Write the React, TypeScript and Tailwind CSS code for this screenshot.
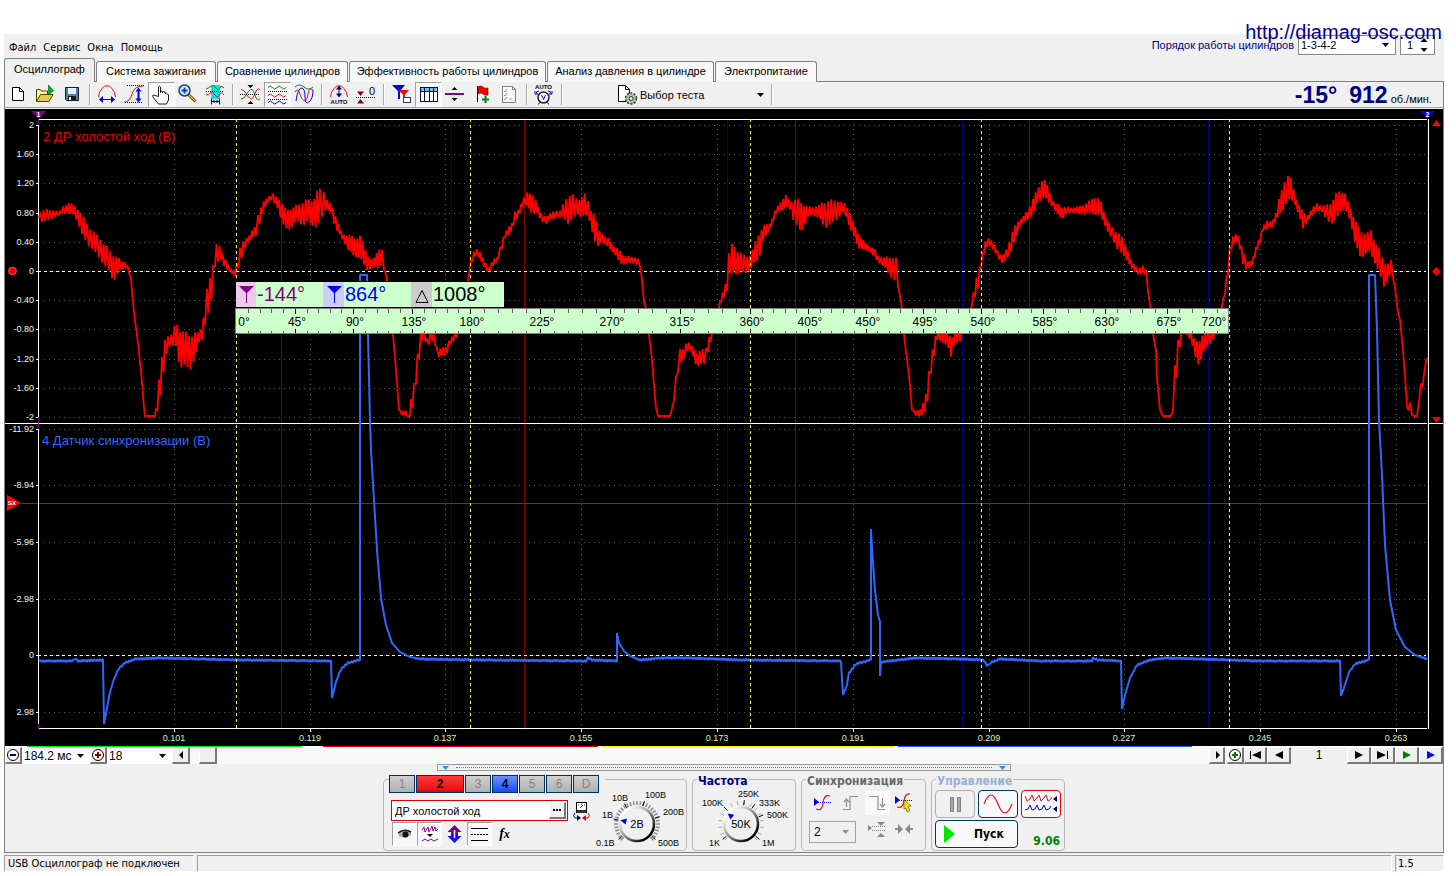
import React from 'react';

type Point = [number, number, number?];

/* ---------- Signal data: [x, level, ripple] ---------- */

const RED: Point[] = [
  [39, 218, 4], [45, 214, 6], [50, 216, 5], [55, 213, 3], [60, 213, 2], [65, 209, 4], [69, 208, 5], [73, 210, 5], [78, 215, 6],
  [82, 225, 10], [87, 234, 10], [92, 239, 9], [97, 246, 10], [102, 251, 10], [107, 258, 11], [112, 266, 12], [116, 267, 11],
  [119, 265, 6], [123, 266, 3], [126, 264, 4], [129, 272, 1], [131, 280, 1], [134, 312], [138, 343], [142, 382], [144, 408],
  [145, 416], [155, 416], [156, 411, 3], [159, 392, 13], [162, 373, 14], [165, 350, 10], [168, 341, 5], [173, 340, 6],
  [176, 334, 13], [180, 348, 18], [183, 350, 17], [192, 351, 16], [195, 346, 12], [199, 337, 5], [202, 332, 7], [205, 318, 8],
  [207, 305, 14], [210, 294, 16], [213, 276, 12], [215, 256, 10], [218, 253, 10], [221, 255, 4], [224, 260, 5], [227, 266, 3],
  [231, 271, 2], [235, 273, 3], [237, 267, 4], [240, 257, 8], [245, 243, 5], [248, 240, 2], [252, 235, 4], [256, 230, 5],
  [258, 222, 8], [261, 213, 5], [265, 203, 4], [268, 200, 2], [271, 197, 3], [273, 198, 4], [276, 201, 4], [279, 205, 6],
  [282, 212, 9], [285, 219, 10], [288, 220, 10], [292, 217, 9], [296, 214, 8], [301, 213, 10], [304, 212, 12], [309, 212, 11],
  [313, 212, 12], [317, 211, 18], [320, 206, 16], [322, 203, 13], [324, 200, 9], [327, 205, 5], [331, 209, 4], [334, 217, 6],
  [337, 225, 5], [341, 234, 3], [344, 238, 3], [348, 242, 7], [352, 246, 9], [356, 247, 9], [360, 248, 11], [364, 254, 10],
  [367, 261, 8], [370, 265, 5], [374, 262, 4], [378, 258, 9], [382, 259, 8], [384, 266, 4], [386, 275, 1], [387, 281],
  [393, 334], [396, 370], [399, 410], [402, 413, 2], [406, 413, 2], [407, 416], [410, 416], [411, 405, 6], [414, 395, 10],
  [416, 375, 10], [419, 350, 8], [421, 336, 6], [424, 332, 6], [427, 343, 4], [432, 334, 6], [435, 340, 4], [437, 352, 3],
  [439, 354, 4], [443, 351, 4], [447, 350, 3], [449, 344, 3], [452, 340, 3], [456, 334, 3], [458, 328], [464, 300], [467, 285],
  [469, 275], [471, 263, 3], [474, 255, 3], [477, 252, 3], [480, 255, 3], [484, 264, 3], [489, 270, 3], [493, 263, 3],
  [497, 260, 2], [500, 250, 3], [502, 244, 4], [505, 236, 2], [508, 232, 4], [512, 226, 3], [515, 217, 5], [518, 215, 4],
  [521, 206, 2], [524, 201, 4], [526, 199, 6], [530, 203, 9], [534, 203, 9], [537, 209, 4], [541, 217, 4], [546, 220, 3],
  [550, 217, 3], [555, 214, 4], [560, 214, 3], [563, 212, 7], [568, 208, 14], [573, 208, 12], [578, 207, 7], [582, 207, 10],
  [586, 205, 11], [588, 207, 6], [591, 218, 8], [595, 230, 13], [598, 237, 9], [601, 237, 5], [605, 241, 4], [610, 244, 5],
  [614, 250, 3], [620, 257, 6], [624, 260, 4], [630, 260, 3], [635, 260, 3], [638, 262, 3], [640, 265, 2], [642, 280, 1],
  [644, 302], [646, 308], [649, 335], [652, 360], [654, 385], [656, 408], [658, 416], [670, 416], [672, 410, 2], [674, 395, 5],
  [676, 385, 8], [678, 365, 8], [680, 358, 8], [683, 355, 6], [686, 348, 5], [689, 346, 3], [693, 352, 4], [697, 360, 7],
  [701, 358, 7], [706, 355, 8], [708, 345, 6], [712, 335, 3], [715, 325], [719, 308], [720, 303, 2], [724, 293, 4],
  [727, 284, 6], [729, 262, 10], [732, 260, 15], [736, 262, 12], [741, 262, 10], [746, 266, 8], [750, 262, 7], [754, 255, 8],
  [757, 250, 12], [760, 243, 11], [763, 233, 8], [767, 230, 5], [771, 225, 2], [775, 213, 2], [778, 209, 3], [782, 205, 5],
  [786, 202, 6], [790, 205, 4], [795, 212, 12], [800, 216, 15], [804, 216, 11], [808, 212, 5], [813, 211, 4], [819, 212, 6],
  [823, 213, 11], [828, 214, 13], [833, 212, 11], [838, 209, 8], [843, 208, 5], [846, 211, 6], [850, 220, 7], [854, 231, 6],
  [858, 240, 7], [862, 244, 5], [866, 247, 3], [870, 249, 3], [875, 254, 4], [878, 259, 3], [884, 262, 4], [888, 265, 8],
  [893, 268, 11], [896, 270, 11], [898, 282, 5], [900, 298, 2], [902, 308], [904, 335], [908, 368], [910, 385], [912, 408, 2],
  [914, 413, 2], [916, 411, 4], [919, 414, 2], [923, 410, 6], [926, 402, 8], [929, 380, 10], [931, 365, 8], [934, 350, 7],
  [937, 335, 5], [940, 335, 5], [944, 338, 6], [950, 342, 7], [951, 350, 6], [954, 338, 8], [960, 335, 6], [966, 320],
  [971, 308], [972, 303, 2], [975, 290, 7], [978, 282, 8], [981, 265, 4], [984, 248, 5], [987, 243, 4], [990, 243, 4],
  [994, 247, 3], [999, 256, 3], [1002, 260, 3], [1006, 254, 5], [1011, 246, 7], [1014, 235, 8], [1018, 226, 5], [1022, 221, 2],
  [1028, 214, 5], [1033, 208, 8], [1037, 196, 7], [1042, 190, 9], [1046, 190, 9], [1050, 198, 5], [1055, 208, 3],
  [1059, 210, 6], [1063, 213, 5], [1068, 210, 3], [1073, 210, 2], [1080, 210, 4], [1086, 209, 5], [1092, 206, 7],
  [1096, 205, 9], [1101, 210, 7], [1105, 220, 5], [1109, 229, 6], [1114, 236, 6], [1119, 242, 9], [1124, 249, 8],
  [1128, 256, 5], [1132, 266, 3], [1138, 271, 3], [1143, 270, 4], [1146, 273, 3], [1148, 290, 1], [1150, 305], [1154, 340],
  [1156, 350], [1157, 378], [1160, 410], [1163, 416], [1171, 416], [1173, 405, 5], [1175, 378, 15], [1178, 350, 10],
  [1180, 340, 8], [1183, 330, 4], [1188, 330, 4], [1191, 338, 5], [1194, 345, 6], [1197, 352, 12], [1201, 350, 10],
  [1205, 340, 9], [1210, 336, 7], [1215, 334, 5], [1219, 322], [1222, 306], [1225, 292, 3], [1228, 270, 4], [1230, 250, 3],
  [1233, 240, 4], [1237, 238, 4], [1240, 244, 5], [1243, 257, 6], [1246, 263, 6], [1248, 266, 4], [1252, 263, 2],
  [1256, 250, 3], [1260, 240, 3], [1263, 228, 2], [1267, 225, 4], [1272, 225, 3], [1276, 216, 3], [1279, 208, 8],
  [1283, 198, 12], [1286, 188, 14], [1288, 187, 12], [1292, 192, 10], [1295, 200, 4], [1299, 210, 5], [1303, 221, 8],
  [1308, 218, 3], [1312, 212, 3], [1317, 207, 4], [1322, 209, 3], [1327, 213, 8], [1332, 212, 10], [1336, 208, 13],
  [1341, 200, 10], [1345, 202, 8], [1348, 208, 6], [1352, 220, 8], [1356, 235, 12], [1360, 243, 13], [1366, 244, 10],
  [1371, 242, 11], [1375, 252, 10], [1379, 262, 12], [1384, 273, 12], [1388, 272, 8], [1391, 268, 7], [1393, 272, 6],
  [1395, 288], [1398, 312], [1400, 320], [1403, 350], [1406, 390], [1407, 408, 2], [1410, 406, 4], [1412, 414, 1], [1414, 416],
  [1417, 416], [1419, 400, 1], [1421, 386, 3], [1424, 380, 6], [1426, 362], [1427, 358],
];

const BLUE: Point[] = [
  [39, 661, 1], [73, 661, 1], [75, 658, 1], [78, 661, 1], [103, 660, 1], [104, 724], [107, 708], [110, 692], [114, 679],
  [119, 668, 1], [125, 663, 1], [135, 659, 1], [160, 658, 1], [200, 659, 1], [240, 660, 1], [331, 661, 1], [332, 698],
  [336, 682], [341, 669, 1], [348, 663, 1], [359, 660, 1], [360, 660], [360, 275], [367, 275], [368, 335], [370, 420],
  [371, 450], [374, 500], [377, 550], [381, 598], [386, 625], [392, 643], [400, 652], [410, 657], [420, 659, 1], [480, 660, 1],
  [586, 661, 1], [588, 658, 1], [592, 660, 1], [616, 661, 1], [617, 661], [617, 633], [619, 643], [624, 651], [630, 656],
  [640, 660, 1], [660, 658, 1], [690, 658, 1], [740, 660, 1], [841, 661, 1], [843, 695], [847, 685], [849, 673, 1],
  [856, 664, 1], [870, 660, 1], [871, 660], [871, 529], [872, 548], [875, 590], [878, 615], [880, 622], [880, 676],
  [881, 662, 1], [915, 658, 1], [960, 659, 1], [984, 660, 1], [987, 666], [992, 662, 1], [1000, 659, 1], [1040, 661, 1],
  [1092, 661, 1], [1093, 658, 1], [1098, 660, 1], [1121, 661, 1], [1122, 709], [1125, 695], [1130, 678], [1137, 665, 1],
  [1150, 660, 1], [1165, 658, 1], [1200, 659, 1], [1260, 661, 1], [1340, 661, 1], [1341, 696], [1345, 685], [1349, 672],
  [1355, 664, 1], [1368, 660, 1], [1369, 660], [1369, 275], [1375, 275], [1377, 330], [1379, 420], [1382, 475], [1385, 545],
  [1390, 600], [1396, 630], [1405, 647], [1415, 655], [1427, 659, 1],
];

function tracePath(points: Point[]): string {
  let d = `M${points[0][0]} ${points[0][1]}`;
  let phase = 0;
  for (let i = 1; i < points.length; i++) {
    const [x0, y0, a0 = 0] = points[i - 1];
    const [x1, y1, a1 = 0] = points[i];
    const steps = Math.max(1, Math.round((x1 - x0) / 1.5));
    for (let s = 1; s <= steps; s++) {
      const t = s / steps;
      const amp = a0 + (a1 - a0) * t;
      const wobble = 1 + 0.15 * Math.sin(phase * 2.3);
      const y = y0 + (y1 - y0) * t + (phase % 2 ? 1 : -1) * amp * wobble;
      d += `L${(x0 + (x1 - x0) * t).toFixed(1)} ${y.toFixed(1)}`;
      phase++;
    }
  }
  return d;
}

const X_TICKS: [number, string][] = [
  [174, '0.101'], [310, '0.119'], [445, '0.137'], [581, '0.155'], [717, '0.173'],
  [853, '0.191'], [989, '0.209'], [1124, '0.227'], [1260, '0.245'], [1396, '0.263'],
];
const Y_TOP: [number, string][] = [
  [125, '2'], [154, '1.60'], [183, '1.20'], [213, '0.80'], [242, '0.40'], [271, '0'],
  [300, '-0.40'], [329, '-0.80'], [359, '-1.20'], [388, '-1.60'], [417, '-2'],
];
const Y_BOTTOM: [number, string][] = [
  [429, '-11.92'], [485, '-8.94'], [542, '-5.96'], [599, '-2.98'], [655, '0'], [712, '2.98'],
];
const ANGLES: number[] = [236, 295, 353, 412, 470, 540, 610, 680, 750, 808, 866, 923, 981, 1043, 1105, 1167, 1229];

function Chart() {
  const minor: number[] = [];
  for (let i = 0; i < ANGLES.length - 1; i++) {
    for (let k = 1; k < 5; k++) minor.push(Math.round(ANGLES[i] + ((ANGLES[i + 1] - ANGLES[i]) * k) / 5));
  }
  return (
    <svg viewBox="5 109 1438 637" className="block h-auto w-full bg-black" fontFamily="'Liberation Sans', sans-serif" role="img" aria-label="Осциллограмма">
      <g shapeRendering="crispEdges" stroke="#585858" strokeDasharray="1 4">
        {[...Y_TOP, ...Y_BOTTOM].map(([y]) => <line key={y} x1="44" x2="1426" y1={y + 0.5} y2={y + 0.5} />)}
        {X_TICKS.map(([x]) => <line key={x} x1={x + 0.5} x2={x + 0.5} y1="124" y2="728" />)}
      </g>
      <g shapeRendering="crispEdges">
        {[281, 524, 795, 1029].map((x) => <rect key={x} x={x} y="120" width="1" height="608" fill="#800000" />)}
        {[451, 727, 962, 1208].map((x) => <rect key={x} x={x} y="120" width="1" height="608" fill="#000080" />)}
        <g stroke="#fff" strokeDasharray="3 3">
          <line x1="38" x2="1426" y1="271.5" y2="271.5" />
          <line x1="38" x2="1426" y1="655.5" y2="655.5" />
        </g>
        <rect x="21" y="503" width="1407" height="1" fill="#e00000" />
        <g fill="#fff">
          <rect x="38" y="119" width="1390" height="1" />
          <rect x="38" y="119" width="1" height="609" />
          <rect x="5" y="423" width="1438" height="1" />
          <rect x="38" y="728" width="1391" height="1" />
          <rect x="1428" y="119" width="1" height="610" />
          {[...Y_TOP, ...Y_BOTTOM].map(([y]) => <rect key={y} x="36" y={y} width="3" height="1" />)}
          {X_TICKS.map(([x]) => <rect key={x} x={x} y="729" width="1" height="3" />)}
        </g>
        <rect x="38" y="119" width="1" height="6" fill="#800080" />
        <rect x="38" y="417" width="1" height="12" fill="#800080" />
        <rect x="38" y="724" width="1" height="5" fill="#800080" />
        <rect x="1427" y="119" width="1" height="610" fill="#0000c0" />
      </g>
      <path d={tracePath(BLUE)} fill="none" stroke="#3068ff" strokeWidth="2" strokeLinejoin="bevel" />
      <path d={tracePath(RED)} fill="none" stroke="#f00" strokeWidth="1.8" strokeLinejoin="bevel" />
      <g shapeRendering="crispEdges" stroke="#ff0" strokeDasharray="3 3">
        {[236, 470, 750, 981, 1229].map((x) => <line key={x} x1={x + 0.5} x2={x + 0.5} y1="119" y2="728" />)}
      </g>

      <g fontSize="9" fill="#eef4f4" textAnchor="end">
        {[...Y_TOP, ...Y_BOTTOM].map(([y, t]) => <text key={y} x="34" y={y + 3}>{t}</text>)}
      </g>
      <g fontSize="9" fill="#d8f0c8" textAnchor="middle">
        {X_TICKS.map(([x, t]) => <text key={x} x={x} y="741">{t}</text>)}
      </g>
      <text x="43" y="141" fontSize="13" fill="#e80000">2 ДР холостой ход (В)</text>
      <text x="42" y="445" fontSize="13" fill="#3068ff">4 Датчик синхронизации (В)</text>

      <path d="M31 111h15l-7.500 8z" fill="#800080" />
      <path d="M1420 111h15l-7.500 8z" fill="#0000e0" />
      <g fontSize="7" fontWeight="bold" fill="#fff" textAnchor="middle">
        <text x="38.500" y="117">1</text>
        <text x="1427.500" y="117">2</text>
      </g>
      <circle cx="12.500" cy="271" r="4" fill="#f00" stroke="#ff8080" strokeWidth=".6" />
      <path d="M7 495l14 8l-14 8z" fill="#f00" />
      <text x="8" y="505" fontSize="6" fontWeight="bold" fill="#fff">SX</text>
      <path d="M1432 126l4.500-6 4.500 6zM1432 271.500l4.500-4.500 4.500 4.500-4.500 4.500zM1432 417l4.500 6 4.500-6z" fill="#f00" />

      <g shapeRendering="crispEdges">
        <rect x="236" y="281" width="268" height="28" fill="#000" />
        <rect x="236" y="282" width="268" height="25" fill="#cfc" />
        <rect x="236" y="282" width="20" height="25" fill="#e8cce8" />
        <rect x="323" y="282" width="21" height="25" fill="#ccf" />
        <rect x="411" y="282" width="21" height="25" fill="#ccc" />
        <rect x="235" y="308" width="994" height="26" fill="#808080" />
        <rect x="236" y="309" width="992" height="24" fill="#cfc" />
        {minor.map((x) => <path key={x} d={`M${x} 309h1v4h-1zM${x} 331h1v2h-1z`} fill="#606060" />)}
        {ANGLES.slice(1, -1).map((x) => <path key={x} d={`M${x} 309h1v5h-1zM${x} 329h1v4h-1z`} fill="#000" />)}
      </g>
      <path d="M239 286h15l-7 7v10h-1v-10z" fill="#800080" />
      <path d="M327 286h15l-7 7v10h-1v-10z" fill="#0000f0" />
      <path d="M416 302.500l6-12 6 12z" fill="none" stroke="#000" />
      <g fontSize="20">
        <text x="257" y="301" fill="#800080">-144°</text>
        <text x="345" y="301" fill="#0000f0">864°</text>
        <text x="433" y="301" fill="#000">1008°</text>
      </g>
      <g fontSize="12" fill="#000" textAnchor="middle">
        {ANGLES.map((x, i) => (
          <text key={x} x={i === 0 ? 244 : i === 16 ? 1214 : x + 2} y="326">{`${i * 45}°`}</text>
        ))}
      </g>
    </svg>
  );
}

/* ---------- Toolbar icons (27 × 25 grid) ---------- */

function wave(x: number, y: number, w: number, n: number, a: number): string {
  const h = w / n / 2;
  let d = `M${x} ${y}`;
  for (let i = 0; i < n; i++) d += `q${h / 2} ${-a * 2} ${h} 0q${h / 2} ${a * 2} ${h} 0`;
  return d;
}

const RED_C = '#e81010';
const BLUE_C = '#0000f0';
const GREEN_C = '#108010';

const ICONS: Record<string, React.ReactNode> = {
  new: <path d="M7.500 5.500h7l4 4v9h-11zM14.500 5.500v4h4" fill="#fff" stroke="#000" />,
  open: (
    <>
      <path d="M4.500 19.500v-12h4l1 1.500h6v3.500" fill="#fff2a0" stroke="#504000" />
      <path d="M4.500 19.500l4-7h12.500l-4 7z" fill="#e8c850" stroke="#504000" />
      <path d="M16.500 3v10l5-4.500z" fill="#00b020" stroke="#005010" strokeWidth=".6" />
    </>
  ),
  save: (
    <>
      <path d="M6.500 5.500h13v13h-12l-1-1z" fill="#5878b8" stroke="#101830" />
      <rect x="9" y="6" width="8" height="6" fill="#e8f0ff" />
      <rect x="9" y="14" width="8" height="4.500" fill="#181818" />
      <rect x="10" y="15" width="2" height="3" fill="#fff" />
    </>
  ),
  width: (
    <>
      <path d="M4.500 15q0-5 4-9l2-2h5l2 2q4 4 4 9" fill="none" stroke={RED_C} />
      <path d="M5 17.500l4-3.500v3h8v-3l4 3.500-4 3.500v-3h-8v3z" fill={BLUE_C} />
    </>
  ),
  height: (
    <>
      <path d="M6 3.500h17M4 20.500h18" stroke="#000" strokeDasharray="1 1" />
      <path d="M3 20q6 0 8-8t11-8" fill="none" stroke={RED_C} />
      <path d="M17.500 5.500l3 4h-2v7h2l-3 4-3-4h2v-7h-2z" fill={BLUE_C} />
    </>
  ),
  hand: (
    <path
      d="M10.500 14.500v-9.500q1-1.500 2 0v5.500v-1q1-1 2 0v1.500v-1q1-1 2.500 0v1.500q1.500-1 2.500.500l1 1v5l-2 4h-8l-4-5-2-3q.500-2 2.500-.500z"
      fill="#fff" stroke="#000" strokeWidth=".9"
    />
  ),
  zoom: (
    <>
      <path d="M13.500 12.500l7 7" stroke="#806000" strokeWidth="3" />
      <path d="M14 13l6 6" stroke="#f0d080" strokeWidth="1" />
      <circle cx="9.500" cy="8.500" r="5.500" fill="#d8ecff" stroke="#203880" strokeWidth="1.500" />
      <path d="M6.500 8.500h6M9.500 5.500v6" stroke="#0040c0" strokeWidth="1.800" />
    </>
  ),
  range: (
    <>
      <rect x="9" y="3" width="9" height="14" fill="#00e8f0" />
      <path d="M4 7q3-1 5-3t5 2 5-2l3 2" fill="none" stroke={GREEN_C} />
      <path d="M4 9.500h18" stroke="#000" strokeDasharray="1 1" />
      <path d="M4 13q3 0 4.500-2t4.500 2 4.500 0 4.500 0" fill="none" stroke={RED_C} />
      <path d="M9.500 16.500v6M17.500 16.500v6M10 19.500h7M12 18v3M15 18v3" stroke="#0000a0" />
    </>
  ),
  cross: (
    <>
      <path d="M4 7.500q3 0 5 4t4.500 5 4.500-5 5-4" fill="none" stroke={RED_C} />
      <path d="M4 17q3 0 5-4t4.500-5.500 4.500 5.500 5 4" fill="none" stroke={GREEN_C} />
      <path d="M3 12.500h20" stroke="#000" strokeDasharray="1 1" />
      <path d="M10.500 3h6l-3 3zM10.500 22h6l-3-3z" fill="#000" />
    </>
  ),
  waves: (
    <>
      <path d={wave(4, 5.5, 18, 2, 1.5)} fill="none" stroke={GREEN_C} />
      <path d={wave(4, 13.5, 18, 2, 1.5)} fill="none" stroke={RED_C} />
      <path d={wave(4, 20.5, 18, 2, 1.5)} fill="none" stroke={BLUE_C} />
      <path d="M4 9.500h19M4 17.500h19" stroke="#000" strokeDasharray="1 1" />
    </>
  ),
  overlay: (
    <>
      <path d={wave(4, 5, 18, 1, 2)} fill="none" stroke={GREEN_C} />
      <path d="M4 10q3-5 5 2t5 7q2 0 3-7t5-4" fill="none" stroke={RED_C} />
      <path d="M5 19q2-14 6-13 3 1 3 9t4 5 4-12" fill="none" stroke={BLUE_C} />
    </>
  ),
  auto: (
    <>
      <path d="M4.500 15q0-5 4-9l2-2h5l2 2q4 4 4 9" fill="none" stroke={RED_C} />
      <path d="M13 3.500l3 4h-2.500v4h2.500l-3 4-3-4h2.500v-4h-2.500z" fill="#000090" />
      <text x="13" y="22" fontSize="6" fontWeight="bold" textAnchor="middle">AUTO</text>
    </>
  ),
  zero: (
    <>
      <path d="M3 15.500h19" stroke="#000" strokeDasharray="1 1" />
      <path d="M4 9.500h7l-3.500 4.500zM4 21.500h7l-3.500-4.500z" fill="#900010" />
      <text x="16" y="13" fontSize="11">0</text>
    </>
  ),
  markers: (
    <>
      <path d="M4 3h13l-5 6v8h-2v-8z" fill={BLUE_C} />
      <path d="M10 8h11l-4 4.500v7h-2v-7z" fill={RED_C} />
      <rect x="15.500" y="15.500" width="7" height="5" fill="#fff" stroke="#303080" />
    </>
  ),
  table: (
    <>
      <rect x="5.500" y="5.500" width="17" height="14" fill="#fff" stroke="#001040" />
      <rect x="6" y="6" width="16" height="3" fill="#80b8e8" />
      <path d="M5.500 9.500h17M9.500 6v13M14.500 6v13M18.500 6v13" stroke="#001040" />
    </>
  ),
  split: (
    <>
      <path d="M3 12h19" stroke="#800090" strokeWidth="2" />
      <path d="M9.500 8h6l-3-3zM9.500 16h6l-3 3z" fill="#000" />
    </>
  ),
  flag: (
    <>
      <path d="M8.500 4v16" stroke="#000" />
      <path d="M9 5q3-2 5 0t5 1v7q-3 1-5-1t-5 0z" fill="#f00000" stroke="#700" strokeWidth=".6" />
      <path d="M13 17.500h7M16.500 14v7" stroke="#008020" strokeWidth="2" />
    </>
  ),
  checklist: (
    <>
      <path d="M6.500 4.500h10l3 3v13h-13zM16.500 4.500v3h3" fill="#f8f8f8" stroke="#808080" />
      <path d="M8 9l1 1 2-3M8 13l1 1 2-3M8 17l1 1 2-3M13 17h3" fill="none" stroke="#909090" strokeWidth=".9" />
    </>
  ),
  autoVolt: (
    <>
      <text x="12.500" y="7" fontSize="6" fontWeight="bold" textAnchor="middle">AUTO</text>
      <path d="M5 12q0-3 3-3M20 12q0-3-3-3M4 9v3h3M21 9v3h-3" fill="none" stroke={BLUE_C} />
      <circle cx="12.500" cy="15.500" r="5.500" fill="#fff" stroke="#202020" strokeWidth="1.500" />
      <path d="M10.500 13l2 4.500 2-4.500" fill="none" stroke={BLUE_C} />
      <path d="M8.500 20.500l-1 2M16.500 20.500l1 2" stroke="#000" />
    </>
  ),
};

function Tool({ icon, label, pressed }: { icon: string; label: string; pressed?: boolean }) {
  return (
    <button
      type="button"
      aria-label={label}
      aria-pressed={pressed}
      className={pressed ? 'w-[27px] border border-t-[#a0a0a0] border-l-[#a0a0a0] border-r-white border-b-white bg-[#f8f8f8]' : 'w-[27px]'}
    >
      <svg viewBox="0 0 27 25" className={pressed ? '-m-px block h-[25px] w-[27px]' : 'block h-[25px] w-[27px]'}>{ICONS[icon]}</svg>
    </button>
  );
}

function Separator() {
  return (
    <span className="flex w-2 justify-center py-0.5">
      <span className="w-0.5 border-r border-white bg-[#a8a8a8]" />
    </span>
  );
}

function Toolbar() {
  return (
    <div className="mb-px flex h-[26px] items-stretch border-b border-[#a0a0a0] bg-[#f0f0f0]">
      <Tool icon="new" label="Новый" />
      <Tool icon="open" label="Открыть" />
      <Tool icon="save" label="Сохранить" />
      <Separator />
      <Tool icon="width" label="Ширина" />
      <Tool icon="height" label="Высота" />
      <Tool icon="hand" label="Перемещение" pressed />
      <Tool icon="zoom" label="Увеличить" />
      <Tool icon="range" label="Диапазон" />
      <Separator />
      <Tool icon="cross" label="Свести" />
      <Tool icon="waves" label="Разделить" pressed />
      <Tool icon="overlay" label="Наложить" />
      <Separator />
      <Tool icon="auto" label="Автомасштаб" />
      <Tool icon="zero" label="Ноль" />
      <Separator />
      <Tool icon="markers" label="Маркеры" />
      <Tool icon="table" label="Таблица" pressed />
      <Tool icon="split" label="Линия" />
      <Tool icon="flag" label="Добавить метку" />
      <Tool icon="checklist" label="Список" />
      <Separator />
      <Tool icon="autoVolt" label="Автоматический вольтметр" />
      <Separator />
      <button type="button" className="ml-[50px] flex w-[152px] items-center gap-0.5 pr-1 text-left">
        <svg viewBox="0 0 22 22" className="h-[22px] w-[22px]">
          <path d="M2.500 1.500h7l4 4v12h-11z" fill="#fff" stroke="#000" />
          <path d="M9.500 1.500v4h4" fill="none" stroke="#000" />
          <circle cx="15" cy="14.500" r="5.500" fill="#a8c0a8" stroke="#303830" strokeWidth="1.500" strokeDasharray="2 1.500" />
          <circle cx="15" cy="14.500" r="2" fill="#f0f0f0" stroke="#303830" />
        </svg>
        <span className="grow">Выбор теста</span>
        <Caret />
      </button>
      <Separator />
      <div className="ml-auto flex items-center gap-3 pr-[11px] text-[#000080]">
        <strong className="text-[23px] leading-6">-15°</strong>
        <span className="flex items-baseline gap-[3px]">
          <strong className="text-[23px] leading-6">912</strong>
          <span className="text-black">об./мин.</span>
        </span>
      </div>
    </div>
  );
}

function Caret({ color = '#000' }: { color?: string }) {
  return (
    <svg viewBox="0 0 7 4" className="h-1 w-[7px]"><path d="M0 0h7l-3.500 4z" fill={color} /></svg>
  );
}

function Combo({ label, value, className, caret }: { label: string; value: string; className: string; caret?: string }) {
  return (
    <span className={`relative flex items-center ${className}`}>
      <select aria-label={label} defaultValue={value} className="h-full w-full appearance-none bg-transparent pl-0.5 outline-none">
        <option>{value}</option>
      </select>
      <span className="pointer-events-none absolute right-1.5"><Caret color={caret} /></span>
    </span>
  );
}

/* ---------- Header ---------- */

function Header() {
  return (
    <header className="flex h-6 items-start justify-between pr-[9px] pl-[5px]">
      <nav className="flex gap-[7px] pt-[7px] font-['DejaVu_Sans_Condensed','Noto_Sans',sans-serif]">
        {['Файл', 'Сервис', 'Окна', 'Помощь'].map((m) => <button key={m} type="button" className="leading-[14px]">{m}</button>)}
      </nav>
      <div className="flex items-center gap-1 pt-px">
        <span className="text-[#000080]">Порядок работы цилиндров</span>
        <Combo label="Порядок работы цилиндров" value="1-3-4-2" className="h-5 w-[98px] border border-[#888] bg-white" />
        <span className="flex h-5 w-[35px] items-center border border-[#888] bg-white pr-1.5">
          <input aria-label="Номер цилиндра" defaultValue="1" className="w-full min-w-0 bg-transparent pl-1.5 outline-none" />
          <svg viewBox="0 0 8 14" className="h-3.5 w-2 shrink-0"><path d="M0.500 4h7l-3.500-4zM0.500 10h7l-3.500 4z" /></svg>
        </span>
      </div>
    </header>
  );
}

const TAB = 'h-[21px] rounded-t-[3px] border border-b-0 border-[#808080] bg-[#f8f8f8] pb-0.5';

function Tabs() {
  return (
    <div role="tablist" className="-mb-px flex items-end gap-px text-center">
      <button type="button" role="tab" aria-selected="true" className="relative h-6 w-[91px] rounded-t-[3px] border border-b-0 border-[#808080] bg-[#f0f0f0] pb-1">Осциллограф</button>
      <button type="button" role="tab" className={`${TAB} w-[120px]`}>Система зажигания</button>
      <button type="button" role="tab" className={`${TAB} w-[131px]`}>Сравнение цилиндров</button>
      <button type="button" role="tab" className={`${TAB} w-[197px]`}>Эффективность работы цилиндров</button>
      <button type="button" role="tab" className={`${TAB} w-[167px]`}>Анализ давления в цилиндре</button>
      <button type="button" role="tab" className={`${TAB} w-[102px]`}>Электропитание</button>
    </div>
  );
}

/* ---------- Navigation under the chart ---------- */

const RAISED = 'flex items-center justify-center border-t border-l border-r-2 border-b-2 border-t-white border-l-white border-r-[#787878] border-b-[#787878] bg-[#f0f0f0]';

function CircleSign({ color, plus }: { color: string; plus?: boolean }) {
  return (
    <svg viewBox="0 0 14 14" className="h-3.5 w-3.5 shrink-0">
      <circle cx="7" cy="7" r="5.500" fill="#fff" stroke="#000" />
      <path d={plus ? 'M4 7h6M7 4v6' : 'M4 7h6'} stroke={color} strokeWidth="2" />
    </svg>
  );
}

function Arrow({ d, color = '#000' }: { d: string; color?: string }) {
  return <svg viewBox="0 0 12 10" className="h-2.5 w-3 shrink-0"><path d={d} fill={color} /></svg>;
}

function NavBar() {
  return (
    <div>
      <div className="flex h-px bg-white">
        <span className="ml-[22px] w-[275px] bg-[#00f000]" />
        <span className="ml-[21px] w-[275px] bg-[#f00000]" />
        <span className="ml-1 w-[292px] bg-[#f8f000]" />
        <span className="ml-1 w-[294px] bg-[#2060ff]" />
      </div>
      <div className="flex h-[17px]">
        <button type="button" aria-label="Уменьшить масштаб" className={`${RAISED} w-[17px]`}><CircleSign color="#000080" /></button>
        <Combo label="Развёртка" value="184.2 мс" className="w-[68px] bg-white text-[12px]" />
        <button type="button" aria-label="Увеличить масштаб" className={`${RAISED} w-[17px]`}><CircleSign color="#900000" plus /></button>
        <Combo label="Деление" value="18" className="w-[65px] bg-white text-[12px]" />
        <button type="button" aria-label="Прокрутить влево" className={`${RAISED} w-[18px]`}><Arrow d="M8 1v8l-4-4z" /></button>
        <input
          type="range"
          aria-label="Позиция"
          min="0"
          max="1000"
          defaultValue="9"
          className="h-[17px] min-w-0 grow appearance-none bg-[#f8f8f8] [&::-webkit-slider-thumb]:h-[17px] [&::-webkit-slider-thumb]:w-[18px] [&::-webkit-slider-thumb]:appearance-none [&::-webkit-slider-thumb]:border [&::-webkit-slider-thumb]:border-r-2 [&::-webkit-slider-thumb]:border-b-2 [&::-webkit-slider-thumb]:border-white [&::-webkit-slider-thumb]:border-r-[#787878] [&::-webkit-slider-thumb]:border-b-[#787878] [&::-webkit-slider-thumb]:bg-[#f0f0f0]"
        />
        <button type="button" aria-label="Прокрутить вправо" className={`${RAISED} w-4`}><Arrow d="M5 1v8l4-4z" /></button>
        <button type="button" aria-label="Добавить" className={`${RAISED} ml-0.5 w-[17px]`}><CircleSign color="#008000" plus /></button>
        <button type="button" aria-label="В начало" className={`${RAISED} w-[23px]`}><Arrow d="M1 1h1v8h-1zM12 1v8l-9-4z" /></button>
        <button type="button" aria-label="Назад" className={`${RAISED} w-6`}><Arrow d="M10 1v8l-8-4z" /></button>
        <span className="w-14 text-center text-[12px] leading-[17px]">1</span>
        <button type="button" aria-label="Вперёд" className={`${RAISED} w-6`}><Arrow d="M2 1v8l8-4z" /></button>
        <button type="button" aria-label="В конец" className={`${RAISED} w-6`}><Arrow d="M10 1h1v8h-1zM0 1v8l9-4z" /></button>
        <button type="button" aria-label="Воспроизвести" className={`${RAISED} w-6`}><Arrow d="M2 1v8l8-4z" color="#008000" /></button>
        <button type="button" aria-label="Продолжить" className={`${RAISED} w-6`}><Arrow d="M2 1v8l8-4z" color="#0000f0" /></button>
      </div>
    </div>
  );
}

/* ---------- Control panel ---------- */

interface Mark { x: number; y: number; label: string; a: number }

function Knob({ width, cx, value, marks, dense, pointer }: { width: string; cx: number; value: string; marks: Mark[]; dense?: boolean; pointer: number }) {
  const ticks: number[] = [];
  for (let a = -225; a <= 45; a += dense ? 9 : 18) ticks.push(a);
  const at = (a: number, r: number) => `${cx + Math.cos((a * Math.PI) / 180) * r} ${38 + Math.sin((a * Math.PI) / 180) * r}`;
  const id = `knob-${value}`;
  return (
    <svg viewBox={dense ? '0 0 91 64' : '0 0 96 64'} className={`block h-16 ${width}`} fontFamily="'Liberation Sans', sans-serif" role="img" aria-label={value}>
      <defs>
        <linearGradient id={id} x1="0" y1="0" x2="1" y2="1">
          <stop offset="0.150" stopColor="#fff" />
          <stop offset="0.500" stopColor="#909090" />
          <stop offset="0.850" stopColor="#000" />
        </linearGradient>
      </defs>
      {ticks.map((a) => <path key={a} d={`M${at(a, 19)}L${at(a, 23)}`} stroke={dense ? '#909090' : '#a8a8a8'} strokeWidth={dense ? 1.6 : 1} />)}
      {marks.map((m) => <path key={m.label} d={`M${at(m.a, 19)}L${at(m.a, 24)}`} stroke="#000" />)}
      <circle cx={cx} cy="38" r="17" fill="#f0f0f0" stroke={`url(#${id})`} strokeWidth="2.500" />
      <path d="M17 0l-6 3v-6z" fill={BLUE_C} transform={`translate(${cx} 38) rotate(${pointer})`} />
      <text x={cx} y="42" fontSize="11" textAnchor="middle">{value}</text>
      <g fontSize="9">{marks.map((m) => <text key={m.label} x={m.x} y={m.y}>{m.label}</text>)}</g>
    </svg>
  );
}

const GROUP = 'h-[72px] rounded border border-[#b8b8b8]';
const TITLE = "-mt-1.5 ml-1 w-fit bg-[#f0f0f0] px-px font-['DejaVu_Sans_Condensed','Noto_Sans',sans-serif] text-[12px] leading-[14px] font-bold";
const CHANNEL = 'h-[18px] border border-[#003060]';
const GREY_CHANNEL = `${CHANNEL} w-[26px] bg-linear-to-b from-[#d0d0d0] to-[#b0b0b0] text-[#808080]`;
const FLAT = 'flex h-6 w-[25px] items-center justify-center';
const SUNK = `${FLAT} border border-t-[#a0a0a0] border-l-[#a0a0a0] border-r-white border-b-white bg-[#f8f8f8]`;

function ChannelGroup() {
  return (
    <section aria-label="Каналы" className={`${GROUP} flex w-[304px] pl-[5px]`}>
      <div className="w-[206px] shrink-0">
        <div className="-mt-[5px] flex w-[216px] gap-px bg-[#f0f0f0] text-[12px] leading-4">
          <button type="button" className={GREY_CHANNEL}>1</button>
          <button type="button" className={`${CHANNEL} w-12 bg-linear-to-b from-[#ff3838] to-[#e80000] font-bold`}>2</button>
          <button type="button" className={GREY_CHANNEL}>3</button>
          <button type="button" className={`${CHANNEL} w-[26px] bg-linear-to-b from-[#6890ff] to-[#1848ff] font-bold`}>4</button>
          <button type="button" className={GREY_CHANNEL}>5</button>
          <button type="button" className={GREY_CHANNEL}>6</button>
          <button type="button" className={GREY_CHANNEL}>D</button>
        </div>
        <div className="mt-[7px] flex items-center gap-1 pl-0.5">
          <div className="flex h-[21px] w-[177px] shrink-0 border border-[#e00000] bg-white p-px">
            <input aria-label="Название канала" defaultValue="ДР холостой ход" className="min-w-0 grow pl-0.5 outline-none" />
            <button type="button" aria-label="Выбрать" className={`${RAISED} w-[17px]`}>
              <svg viewBox="0 0 9 2" className="h-0.5 w-[9px]"><path d="M0 0h2v2H0zM3 0h2v2H3zM6 0h2v2H6z" /></svg>
            </button>
          </div>
          <button type="button" aria-label="Поменять датчик" className="shrink-0">
            <svg viewBox="0 0 19 20" className="block h-5 w-[19px]">
              <rect x="4.500" y="1.500" width="10" height="10" fill="#fff" stroke="#000" />
              <path d="M5 9h9v3h-9z" fill="#303030" />
              <path d="M6 4h1M9 3h1M12 4h1M8 7l3-3" stroke="#000" strokeWidth=".8" />
              <path d="M3 12q-3 3 0 5h3" fill="none" stroke="#000090" />
              <path d="M5 14l4 3-4 3z" fill="#000090" />
              <path d="M16 12q3 3 0 5h-3" fill="none" stroke="#f00000" />
              <path d="M14 14l-4 3 4 3z" fill="#f00000" />
            </svg>
          </button>
        </div>
        <div className="mt-px flex pl-[3px]">
          <button type="button" aria-label="Показать" className={SUNK}>
            <svg viewBox="0 0 16 12" className="h-3 w-4">
              <path d="M1 4q6-4 13-1v4q-6 5-12 1z" fill="#b0a8a0" />
              <path d="M1 5q6-5 13-1" fill="none" stroke="#202020" strokeWidth="1.500" />
              <circle cx="8.500" cy="6.500" r="3" fill="#101010" />
            </svg>
          </button>
          <button type="button" aria-label="Сгладить" className={SUNK}>
            <svg viewBox="0 0 18 18" className="h-[18px] w-[18px]" fill="none" stroke="#900090">
              <path d="M1 5l2-3 1 5 3-5 1 5 3-6 1 5 2-4 1 4 2-2" />
              <path d="M6 9h6l-3 3z" fill="#000" stroke="none" />
              <path d="M1 16l3-2 3 2 3-2 3 2 4-2" />
            </svg>
          </button>
          <button type="button" aria-label="Инвертировать" className={FLAT}>
            <svg viewBox="0 0 15 18" className="h-[18px] w-[15px]">
              <path d="M7.500 0l7 7h-3.500v2h-7v-2h-3.500z" fill="#800090" />
              <path d="M7.500 18l7-7h-3.500v-2h-7v2h-3.500z" fill="#1010ff" />
              <path d="M7.500 5v8" stroke="#f0f0f0" strokeWidth="1.500" />
            </svg>
          </button>
          <button type="button" aria-label="Уровни" className={SUNK}>
            <svg viewBox="0 0 17 15" className="h-[15px] w-[17px]" stroke="#000">
              <path d="M0 1.500h17M0 13.500h17" /><path d="M0 7.500h17" strokeDasharray="2 1" />
            </svg>
          </button>
          <button type="button" aria-label="Функция" className={`${FLAT} font-['Liberation_Serif',serif] text-[14px] font-bold italic`}>
            f<span className="text-[12px]">x</span>
          </button>
        </div>
      </div>
      <div className="pt-1.5">
        <Knob
          width="w-[91px]" cx={42} value="2В" dense pointer={193}
          marks={[
            { x: 1, y: 60, label: '0.1В', a: 140 }, { x: 7, y: 32, label: '1В', a: 192 }, { x: 17, y: 15, label: '10В', a: 238 },
            { x: 50, y: 12, label: '100В', a: 288 }, { x: 68, y: 29, label: '200В', a: 342 }, { x: 63, y: 60, label: '500В', a: 40 },
          ]}
        />
      </div>
    </section>
  );
}

function FrequencyGroup() {
  return (
    <section aria-label="Частота" className={`${GROUP} w-[104px]`}>
      <h2 className={`${TITLE} text-[#000080]`}>Частота</h2>
      <div className="-mt-0.5 pl-1">
        <Knob
          width="w-24" cx={44} value="50K" pointer={218}
          marks={[
            { x: 12, y: 60, label: '1K', a: 140 }, { x: 5, y: 20, label: '100K', a: 225 }, { x: 41, y: 11, label: '250K', a: 278 },
            { x: 62, y: 20, label: '333K', a: 305 }, { x: 70, y: 32, label: '500K', a: 338 }, { x: 65, y: 60, label: '1M', a: 40 },
          ]}
        />
      </div>
    </section>
  );
}

function SyncGroup() {
  return (
    <section aria-label="Синхронизация" className={`${GROUP} w-[125px]`}>
      <h2 className={`${TITLE} text-[#686868]`}>Синхронизация</h2>
      <div className="grid grid-cols-4 justify-items-center gap-y-0.5 px-[7px] pt-[3px]">
        <button type="button" aria-label="По уровню" className={FLAT}>
          <svg viewBox="0 0 20 18" className="h-[18px] w-5">
            <path d="M1 4v8l5-4z" fill={BLUE_C} /><path d="M5 8.500h13" stroke={BLUE_C} strokeDasharray="1 1" />
            <path d="M3 15q6 3 7-6t7-7" fill="none" stroke={RED_C} strokeWidth="1.200" />
          </svg>
        </button>
        <button type="button" aria-label="По фронту" className={FLAT}>
          <svg viewBox="0 0 20 18" className="h-[18px] w-5" fill="none" stroke="#909090" strokeWidth="1.200"><path d="M3 15.500h7v-13h8M6.500 13v-8M4 8l2.500-3 2.500 3" /></svg>
        </button>
        <button type="button" aria-label="По спаду" className={`${FLAT} bg-[#fafafa]`}>
          <svg viewBox="0 0 20 18" className="h-[18px] w-5" fill="none" stroke="#909090" strokeWidth="1.200"><path d="M2 2.500h9v13h7M15.500 4v9M13 10l2.500 3 2.500-3" /></svg>
        </button>
        <button type="button" aria-label="Выбрать уровень" className={FLAT}>
          <svg viewBox="0 0 20 20" className="h-5 w-5">
            <path d="M1 3v8l5-4z" fill={BLUE_C} /><path d="M5 7.500h14" stroke={BLUE_C} strokeDasharray="1 1" />
            <path d="M3 14q6 2 7-6t6-7" fill="none" stroke={RED_C} strokeWidth="1.200" />
            <path d="M10 7l7 6-3 .500 2 4-3 1.500-1-4-2 1z" fill="#ffe800" stroke="#404000" strokeWidth=".6" />
          </svg>
        </button>
        <Combo label="Канал синхронизации" value="2" caret="#909090" className="col-span-2 mt-1 h-[22px] w-[47px] justify-self-start border border-[#a0a0a0] pl-0.5 text-[12px]" />
        <button type="button" aria-label="Расширить" className={FLAT}>
          <svg viewBox="0 0 20 18" className="h-[18px] w-5" fill="#888"><path d="M1 5v6l4-3zM10 2h8l-4 4zM10 17h8l-4-4z" /><path d="M5 6.500h13M5 10.500h13" stroke="#888" strokeDasharray="1 1" /></svg>
        </button>
        <button type="button" aria-label="Сузить" className={FLAT}>
          <svg viewBox="0 0 20 12" className="h-3 w-5" fill="#888"><path d="M1 5h3v-4l5 5-5 5v-4h-3zM19 5h-3v-4l-5 5 5 5v-4h3z" /></svg>
        </button>
      </div>
    </section>
  );
}

function RunGroup() {
  return (
    <section aria-label="Управление" className={`${GROUP} w-[134px]`}>
      <h2 className={`${TITLE} text-[#98b0d0]`}>Управление</h2>
      <div className="grid grid-cols-3 gap-x-[3px] gap-y-0.5 px-[3px] pt-0.5">
        <button type="button" aria-label="Пауза" className="flex h-7 items-center justify-center rounded-sm border border-[#b0b0b0]">
          <svg viewBox="0 0 11 15" className="h-[15px] w-[11px]" fill="#a8a8a8" stroke="#808080"><path d="M.500.500h3v14h-3zM7.500.500h3v14h-3z" /></svg>
        </button>
        <button type="button" aria-label="Один кадр" className="flex h-7 items-center justify-center rounded-sm border border-[#003868] bg-[#f8f8f8]">
          <svg viewBox="0 0 30 20" className="h-5 w-[30px]"><path d="M1 10Q8-8 15 10t14 0" fill="none" stroke={RED_C} strokeWidth="1.200" /></svg>
        </button>
        <button type="button" aria-label="Поток" className="flex h-7 items-center justify-center rounded-sm border border-[#e80000] bg-[#f8f8f8]">
          <svg viewBox="0 0 34 20" className="h-5 w-[34px]" fill="none">
            <path d="M1 2l2 5 3-2 2-4 2 6 3-3 2-3 2 6 3-3 2-3 2 6 3-2 1-2" stroke={RED_C} />
            <path d="M1 16l3-1 2-4 2 5 3-1 2-4 2 5 3-1 2-4 2 5 3-1 2-3" stroke={BLUE_C} />
            <path d="M33 2v6l-4-3zM33 12v6l-4-3z" fill="#000080" />
          </svg>
        </button>
        <button type="button" className="col-span-2 flex h-7 items-center rounded-sm border border-[#003868] bg-[#f8f8f8] pl-2 text-[12px] font-bold">
          <svg viewBox="0 0 11 18" className="h-[18px] w-[11px]"><path d="M0 0l11 9-11 9z" fill="#00e800" /></svg>
          <span className="ml-[19px] font-['DejaVu_Sans_Condensed','Noto_Sans',sans-serif]">Пуск</span>
        </button>
        <span className="self-end justify-self-end pr-px font-['DejaVu_Sans_Condensed','Noto_Sans',sans-serif] text-[12px] leading-[14px] font-bold text-[#008000]">9.06</span>
      </div>
    </section>
  );
}

export default function App() {
  return (
    <div className="relative bg-white pt-[34px] pr-3 pb-1 pl-1 font-['Liberation_Sans',sans-serif] text-[11px] leading-[14px] text-black">
      <div className="bg-[#f0f0f0]">
        <Header />
        <Tabs />
        <main className="border border-[#808080]">
          <Toolbar />
          <Chart />
          <NavBar />
          <div className="mx-auto flex h-[7px] w-[574px] items-center justify-between border border-[#989898] px-1">
            <Caret color="#3090f0" />
            <span className="w-[536px] border-t border-dotted border-[#3090f0]" />
            <Caret color="#3090f0" />
          </div>
          <div className="flex justify-center gap-[5px] pt-2 pb-px">
            <ChannelGroup />
            <FrequencyGroup />
            <SyncGroup />
            <RunGroup />
          </div>
        </main>
        <footer className="mt-0.5 flex h-[17px] gap-[3px] font-['DejaVu_Sans_Condensed','Noto_Sans',sans-serif] leading-[15px]">
          <span className="w-[190px] border border-t-[#a0a0a0] border-l-[#a0a0a0] border-r-white border-b-white pl-[3px]">USB Осциллограф не подключен</span>
          <span className="grow border border-t-[#a0a0a0] border-l-[#a0a0a0] border-r-white border-b-white" />
          <span className="w-[49px] border border-t-[#a0a0a0] border-l-[#a0a0a0] border-r-white border-b-white pl-0.5">1.5</span>
        </footer>
      </div>
      <a href="http://diamag-osc.com" className="absolute top-5 right-3.5 text-[20px] leading-6 text-[#000090]">http://diamag-osc.com</a>
    </div>
  );
}
